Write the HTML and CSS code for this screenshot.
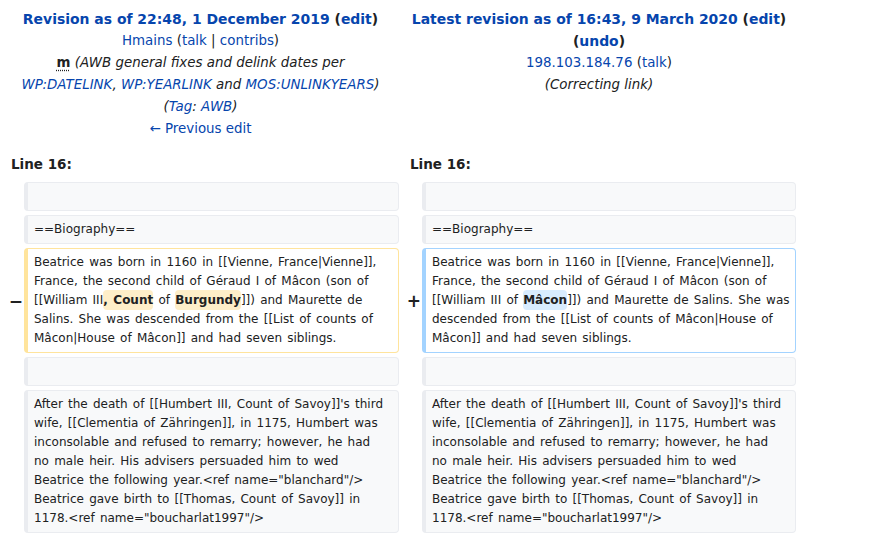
FILE: index.html
```html
<!DOCTYPE html>
<html>
<head>
<meta charset="utf-8">
<link rel="stylesheet" href="styles.css">
</head>
<body>
<div class="diff">
  <div class="title title-old">
    <div class="t-main"><a href="#">Revision as of 22:48, 1 December 2019</a> (<a href="#">edit</a>)</div>
    <div class="t-line"><a href="#">Hmains</a> (<a href="#">talk</a> | <a href="#">contribs</a>)</div>
    <div class="t-line"><abbr class="minor">m</abbr> <i class="comment">(AWB general fixes and delink dates per<br><a href="#">WP:DATELINK</a>, <a href="#">WP:YEARLINK</a> and <a href="#">MOS:UNLINKYEARS</a>)</i></div>
    <div class="t-line"><i class="comment">(<a href="#">Tag</a>: <a href="#">AWB</a>)</i></div>
    <div class="t-line"><a href="#">← Previous edit</a></div>
  </div>
  <div class="title title-new">
    <div class="t-main"><a href="#">Latest revision as of 16:43, 9 March 2020</a> (<a href="#">edit</a>) (<a href="#">undo</a>)</div>
    <div class="t-line"><a href="#">198.103.184.76</a> (<a href="#">talk</a>)</div>
    <div class="t-line"><i class="comment">(Correcting link)</i></div>
  </div>

  <div class="lineno lineno-old">Line 16:</div>
  <div class="lineno lineno-new">Line 16:</div>

  <div class="marker"></div>
  <div class="cell context"><br></div>
  <div class="marker"></div>
  <div class="cell context"><br></div>

  <div class="marker"></div>
  <div class="cell context">==Biography==</div>
  <div class="marker"></div>
  <div class="cell context">==Biography==</div>

  <div class="marker">−</div>
  <div class="cell deleted">Beatrice was born in 1160 in [[Vienne, France|Vienne]],<br>France, the second child of Géraud I of Mâcon (son of<br>[[William III<del class="change">, Count</del> of <del class="change">Burgundy</del>]]) and Maurette de<br>Salins. She was descended from the [[List of counts of<br>Mâcon|House of Mâcon]] and had seven siblings.</div>
  <div class="marker">+</div>
  <div class="cell added">Beatrice was born in 1160 in [[Vienne, France|Vienne]],<br>France, the second child of Géraud I of Mâcon (son of<br>[[William III of <ins class="change">Mâcon</ins>]]) and Maurette de Salins. She was<br>descended from the [[List of counts of Mâcon|House of<br>Mâcon]] and had seven siblings.</div>

  <div class="marker"></div>
  <div class="cell context"><br></div>
  <div class="marker"></div>
  <div class="cell context"><br></div>

  <div class="marker"></div>
  <div class="cell context">After the death of [[Humbert III, Count of Savoy]]'s third<br>wife, [[Clementia of Zähringen]], in 1175, Humbert was<br>inconsolable and refused to remarry; however, he had<br>no male heir. His advisers persuaded him to wed<br>Beatrice the following year.&lt;ref name="blanchard"/&gt;<br>Beatrice gave birth to [[Thomas, Count of Savoy]] in<br>1178.&lt;ref name="boucharlat1997"/&gt;</div>
  <div class="marker"></div>
  <div class="cell context">After the death of [[Humbert III, Count of Savoy]]'s third<br>wife, [[Clementia of Zähringen]], in 1175, Humbert was<br>inconsolable and refused to remarry; however, he had<br>no male heir. His advisers persuaded him to wed<br>Beatrice the following year.&lt;ref name="blanchard"/&gt;<br>Beatrice gave birth to [[Thomas, Count of Savoy]] in<br>1178.&lt;ref name="boucharlat1997"/&gt;</div>
</div>
</body>
</html>
```

FILE: styles.css
```css
html, body {
  margin: 0;
  padding: 0;
  background: #ffffff;
}
body {
  font-family: "DejaVu Sans", sans-serif;
  color: #202122;
}
a {
  color: #0645ad;
  text-decoration: none;
}
.diff {
  display: grid;
  grid-template-columns: 19px 375px 23px 374px;
  row-gap: 4px;
  margin-left: 5px;
  padding-top: 8px;
}
.title {
  grid-column: span 2;
  text-align: center;
  font-size: 13.4px;
  line-height: 22px;
}
.title-old {
  padding-right: 3px;
}
.title-new {
  padding-left: 3px;
}
.t-main {
  font-size: 13.95px;
  font-weight: bold;
}
.comment {
  font-style: italic;
}
.minor {
  font-weight: bold;
  text-decoration: underline dotted;
  text-underline-offset: 3px;
}
.lineno {
  grid-column: span 2;
  font-size: 13.5px;
  font-weight: bold;
  line-height: 22px;
  padding: 9px 0 3px 6px;
}
.lineno-new {
  padding-left: 11px;
}
.marker {
  display: flex;
  align-items: center;
  justify-content: flex-end;
  padding-right: 1px;
  font-size: 17px;
  font-weight: bold;
}
.cell {
  font-size: 12px;
  line-height: 19px;
  word-spacing: 1.4px;
  white-space: nowrap;
  padding: 4px 6px;
  border: 1px solid #eaecf0;
  border-left-width: 4px;
  border-radius: 4px;
}
.context {
  background: #f8f9fa;
  border-color: #eaecf0;
}
.deleted {
  border-color: #ffe49c;
}
.added {
  border-color: #a3d3ff;
}
.change {
  font-weight: bold;
  text-decoration: none;
  border-radius: 4px;
  padding: 3px 0;
}
.deleted .change {
  background: #feeec8;
}
.added .change {
  background: #d8ecff;
}
```
